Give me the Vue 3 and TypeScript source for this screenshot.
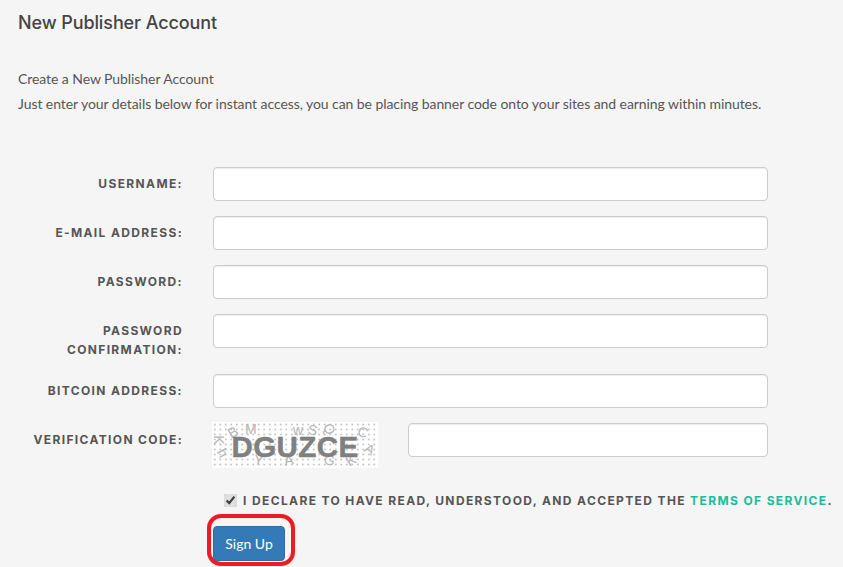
<script setup lang="ts">
interface Field { label: string; type: string }
const fields: Field[] = [
  { label: 'Username:', type: 'text' },
  { label: 'E-mail Address:', type: 'email' },
  { label: 'Password:', type: 'password' },
  { label: 'Password Confirmation:', type: 'password' },
  { label: 'Bitcoin Address:', type: 'text' },
]
const noise = [
  { c: 'K', x: 2, y: 11, r: 90 }, { c: 'B', x: 16, y: 3, r: -30 }, { c: 'M', x: 33, y: 0, r: 0 },
  { c: 'w', x: 81, y: 1, r: 0 }, { c: 'S', x: 96, y: 1, r: 10 }, { c: 'Q', x: 112, y: 0, r: 70 },
  { c: 'C', x: 146, y: 3, r: 20 }, { c: 'A', x: 153, y: 20, r: 30 }, { c: 'h', x: 7, y: 24, r: 60 },
  { c: 'Y', x: 42, y: 31, r: 10 }, { c: 'A', x: 72, y: 31, r: -10 }, { c: 'G', x: 112, y: 31, r: 10 }, { c: 'K', x: 134, y: 31, r: -30 },
]
</script>

<template>
  <main class="page">
    <h1 class="title">New Publisher Account</h1>
    <p class="intro intro-first">Create a New Publisher Account</p>
    <p class="intro">Just enter your details below for instant access, you can be placing banner code onto your sites and earning within minutes.</p>

    <form class="form" @submit.prevent>
      <div v-for="f in fields" :key="f.label" class="row">
        <label class="label">{{ f.label }}</label>
        <input class="input" :type="f.type" />
      </div>

      <div class="row">
        <label class="label">Verification Code:</label>
        <div class="captcha-row">
          <div class="captcha">
            <span
              v-for="(n, i) in noise"
              :key="i"
              class="noise"
              :style="{ left: n.x + 'px', top: n.y + 'px', transform: `rotate(${n.r}deg)` }"
            >{{ n.c }}</span>
            <span class="captcha-text">DGUZCE</span>
          </div>
          <input class="input captcha-input" type="text" />
        </div>
      </div>

      <div class="terms">
        <input class="check" type="checkbox" checked />
        <span class="terms-text">I declare to have read, understood, and accepted the <a class="link" href="#">Terms of Service</a>.</span>
      </div>

      <div class="submit">
        <button class="btn" type="submit">Sign Up</button>
      </div>
    </form>
  </main>
</template>

<style>
html, body { margin: 0; background: #f5f5f5; }
</style>

<style scoped>
.page {
  box-sizing: border-box;
  width: 843px;
  height: 567px;
  overflow: hidden;
  padding: 12px 0 0 18px;
  background: #f5f5f5;
  font-family: Lato, "Open Sans", sans-serif;
  color: #555;
}
.title {
  margin: 0 0 35px;
  font-family: Inter, "Open Sans", sans-serif;
  font-size: 18px;
  line-height: 22px;
  font-weight: 500;
  letter-spacing: -0.1px;
  color: #444;
}
.intro {
  margin: 0 0 6px;
  font-size: 14px;
  line-height: 19px;
  letter-spacing: -0.07px;
  color: #555;
}
.form { margin-top: 54px; }
.row {
  display: grid;
  grid-template-columns: 165px 555px;
  column-gap: 30px;
  margin-bottom: 15px;
  align-items: start;
}
.label {
  padding-top: 7px;
  text-align: right;
  font-family: Inter, "Open Sans", sans-serif;
  font-size: 12px;
  line-height: 19px;
  font-weight: 700;
  letter-spacing: 1.36px;
  text-transform: uppercase;
  color: #555;
}
.input {
  box-sizing: border-box;
  display: block;
  width: 100%;
  height: 34px;
  padding: 6px 12px;
  background: #fff;
  border: 1px solid #ccc;
  border-radius: 4px;
  box-shadow: inset 0 1px 1px rgba(0, 0, 0, 0.075);
}
.captcha-row {
  display: flex;
  align-items: flex-start;
  justify-content: space-between;
}
.captcha {
  position: relative;
  width: 166px;
  height: 46px;
  margin-left: -1px;
  margin-top: -1px;
  overflow: hidden;
  background-color: #fff;
  background-image: radial-gradient(circle, #c4c4c4 0.9px, transparent 1.2px);
  background-size: 5.5px 5px;
  display: flex;
  align-items: center;
  justify-content: center;
}
.noise {
  position: absolute;
  font-family: "Liberation Sans", sans-serif;
  font-size: 14px;
  line-height: 14px;
  color: #b5b5b5;
}
.captcha-text {
  position: relative;
  top: 2px;
  font-family: "Liberation Sans", sans-serif;
  font-size: 29.5px;
  line-height: 34px;
  font-weight: 700;
  letter-spacing: 0.4px;
  color: #808080;
  -webkit-text-stroke: 0.5px #808080;
}
.captcha-input { width: 360px; }
.terms {
  display: flex;
  align-items: center;
  margin: 22px 0 0 206px;
  height: 20px;
}
.check { width: 13px; height: 13px; margin: 0; accent-color: #dedede; }
.terms-text {
  margin-left: 6px;
  font-family: Inter, "Open Sans", sans-serif;
  font-size: 12px;
  font-weight: 700;
  letter-spacing: 1.37px;
  text-transform: uppercase;
  white-space: nowrap;
  color: #555;
}
.link { color: #1abc9c; text-decoration: none; }
.submit {
  position: relative;
  width: 72px;
  margin: 16px 0 0 195px;
}
.submit::after {
  content: "";
  position: absolute;
  left: -6px;
  top: -12px;
  width: 80px;
  height: 44px;
  border: 4px solid #ed1c24;
  border-radius: 14px;
  pointer-events: none;
}
.btn {
  display: block;
  box-sizing: border-box;
  width: 72px;
  height: 35px;
  background: #337ab7;
  border: 1px solid #2e6da4;
  border-radius: 4px;
  color: #fff;
  font-family: Lato, sans-serif;
  font-size: 14px;
  padding: 0;
}
</style>
